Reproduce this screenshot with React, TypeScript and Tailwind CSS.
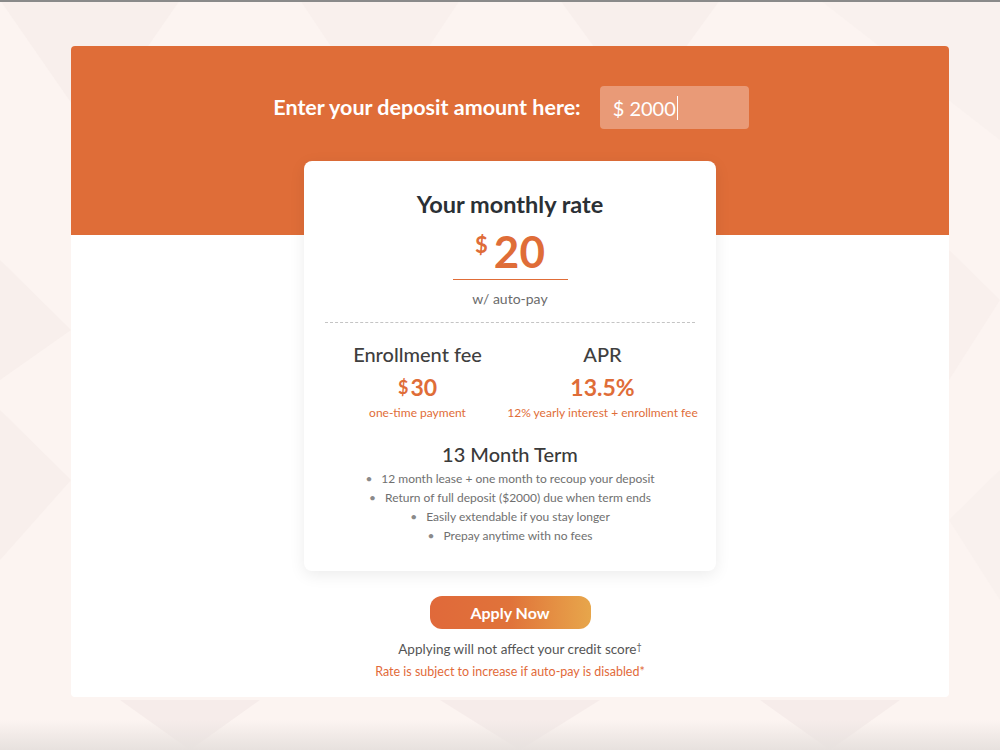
import React from 'react'

const FONT = { fontFamily: 'Lato, "Open Sans", sans-serif' }

function Backdrop() {
  return (
    <svg className="absolute inset-0 w-full h-full" viewBox="0 0 1000 750" preserveAspectRatio="none">
      <rect width="1000" height="750" fill="#fcf4f1" />
      <polygon points="0,0 180,0 90,130" fill="#f8efec" />
      <polygon points="300,0 460,0 380,120" fill="#f9f0ed" />
      <polygon points="560,0 720,0 640,110" fill="#f8efec" />
      <polygon points="820,0 1000,0 1000,140" fill="#f9f1ee" />
      <polygon points="0,260 71,330 0,380" fill="#f8efec" />
      <polygon points="0,410 71,480 0,560" fill="#f8efec" />
      <polygon points="949,250 1000,300 949,380" fill="#f9f0ed" />
      <polygon points="949,520 1000,470 1000,600" fill="#f9f1ee" />
      <polygon points="120,700 260,700 190,750" fill="#f6ecea" />
      <polygon points="440,700 600,700 520,750" fill="#f6ecea" />
      <polygon points="760,700 900,700 830,750" fill="#f6ecea" />
      <rect x="0" y="0" width="1000" height="2" fill="#8a8a8a" />
    </svg>
  )
}

export default function App() {
  return (
    <div className="relative w-[1000px] h-[750px] overflow-hidden" style={FONT}>
      <Backdrop />
      <div className="absolute inset-x-0 bottom-0 h-[30px] bg-gradient-to-b from-transparent to-[#e7e1de]" />

      <div className="relative pt-[46px] pl-[71px] pr-[51px]">
        <div className="rounded-[4px] overflow-hidden bg-white">
          {/* Header */}
          <div className="bg-[#df6d38] h-[189px] flex justify-center pt-[40px]">
            <div className="flex items-center h-[43px] gap-[19px] ml-[2px]">
              <span className="text-white font-bold text-[21.5px]">Enter your deposit amount here:</span>
              <div className="w-[149px] h-[43px] rounded-[4px] bg-[#e99a77] flex items-center px-[13px] text-white text-[20px]">
                $ 2000<span className="w-px h-[24px] bg-white ml-px" />
              </div>
            </div>
          </div>

          {/* Body */}
          <div className="relative h-[462px] flex flex-col items-center">
            <div className="-mt-[74px] w-[412px] h-[410px] bg-white rounded-[8px] shadow-[0_4px_16px_rgba(0,0,0,0.08)] px-[21px] pt-[28px] flex flex-col items-center">
              <h2 className="text-[23.5px] font-bold text-[#2b3035] leading-[30px]">Your monthly rate</h2>
              <div className="mt-[10px] flex items-start text-[#df6d38] font-bold leading-none">
                <span className="text-[22px] mt-[5px] mr-[6px]">$</span>
                <span className="text-[44px]">20</span>
              </div>
              <div className="mt-[6px] w-[115px] border-t border-[#e06d38]" />
              <p className="mt-[10px] text-[14px] text-[#6b6b6b] leading-[17px]">w/ auto-pay</p>
              <div className="mt-[15px] w-full border-t border-dashed border-[#c4c4c4]" />

              <div className="grid grid-cols-2 w-full mt-[19px] text-center">
                {[
                  { label: 'Enrollment fee', cur: true, value: '30', note: 'one-time payment' },
                  { label: 'APR', cur: false, value: '13.5%', note: '12% yearly interest + enrollment fee' },
                ].map(c => (
                  <div key={c.label} className="flex flex-col items-center">
                    <span className="text-[20px] font-medium text-[#3f3f3f] leading-[25px]">{c.label}</span>
                    <span className="mt-[7px] text-[#df6d38] font-bold leading-[26px] flex items-start">
                      {c.cur && <span className="text-[18px] mr-[2px]">$</span>}
                      <span className="text-[23px]">{c.value}</span>
                    </span>
                    <span className="mt-[5px] text-[12px] text-[#df6d38] leading-[16px] whitespace-nowrap">{c.note}</span>
                  </div>
                ))}
              </div>

              <h3 className="mt-[21px] text-[20px] font-medium text-[#3a3a3a] leading-[25px]">13 Month Term</h3>
              <ul className="mt-[2px] text-[12px] text-[#707070] text-center leading-[19px]">
                {[
                  '12 month lease + one month to recoup your deposit',
                  'Return of full deposit ($2000) due when term ends',
                  'Easily extendable if you stay longer',
                  'Prepay anytime with no fees',
                ].map(t => (
                  <li key={t}>
                    <span className="mr-[9px] text-[#8a8a8a]">•</span>
                    {t}
                  </li>
                ))}
              </ul>
            </div>

            <button className="mt-[25px] w-[161px] h-[33px] rounded-[12px] bg-gradient-to-r from-[#e0693a] via-[#e0733a] to-[#e7a64b] text-white font-bold text-[16px]">
              Apply Now
            </button>
            <p className="mt-[11px] ml-[20px] text-[13.5px] text-[#555] leading-[19px]">
              Applying will not affect your credit score<sup className="text-[9px]">†</sup>
            </p>
            <p className="mt-[4px] text-[12.5px] text-[#e26a3a] leading-[18px]">
              Rate is subject to increase if auto-pay is disabled*
            </p>
          </div>
        </div>
      </div>
    </div>
  )
}
